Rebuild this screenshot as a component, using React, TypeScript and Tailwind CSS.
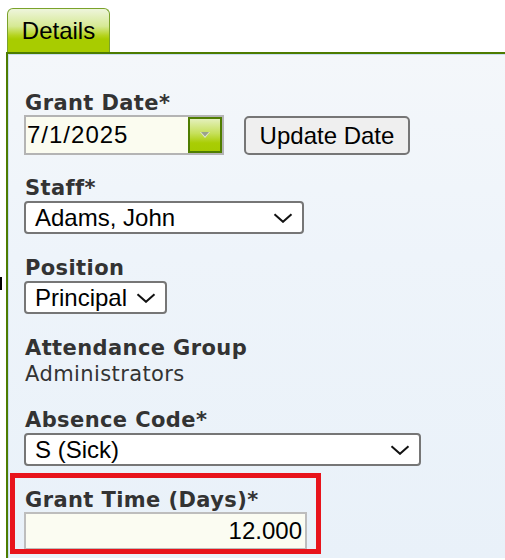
const Chevron = () => (
  <svg width="20" height="10" viewBox="0 0 20 10" fill="none">
    <path d="M1.5 1.2 10 8.8l8.5-7.6" stroke="#111" strokeWidth="2" />
  </svg>
);

const Label = ({ children }: { children: React.ReactNode }) => (
  <div className="ml-px font-['DejaVu_Sans',Verdana,sans-serif] text-[21px] leading-[24px] font-bold tracking-[0.4px] text-[#333]">
    {children}
  </div>
);

const FakeSelect = ({ value, width }: { value: string; width: string }) => (
  <div
    className={`mt-px flex h-[33px] items-center justify-between rounded-[4px] border-2 border-[#767676] bg-white pr-[9px] pl-[9px] text-[24px] text-black ${width}`}
  >
    <span className="leading-none">{value}</span>
    <Chevron />
  </div>
);

export default function App() {
  return (
    <div className="relative min-h-[560px] bg-white pt-2 font-['Liberation_Sans',Arial,sans-serif]">
      {/* stray clipped glyph at left edge */}
      <div className="absolute top-[277px] left-0 h-[13px] w-[2px] bg-black" />

      <div className="ml-[7px] flex h-[44px] w-[103px] items-center justify-center rounded-t-[6px] border border-b-0 border-[#7aa22a] bg-[linear-gradient(to_bottom,#eef5dc_0%,#d6e994_40%,#b4d31c_62%,#a8cc00_70%,#a8cc00_100%)] pt-px text-[24px] text-black">
        Details
      </div>

      <div className="ml-[6px] border-t-2 border-l-2 border-[#4d7c00]">
        <div className="min-h-[504px] border-t border-l border-[#c9def0] bg-[linear-gradient(to_bottom,#f4f7fa_0%,#eef4fa_40%,#e9f1f9_100%)] pt-[36px] pl-[15px]">
          {/* Grant Date */}
          <Label>Grant Date*</Label>
          <div className="flex items-center">
            <div className="flex h-[40px] w-[200px] border-2 border-[#b4b4b4] bg-[#fbfcf0]">
              <div className="flex flex-1 items-center pl-px text-[24px] tracking-[1px] text-black">
                7/1/2025
              </div>
              <div className="flex w-[34px] items-center justify-center border-2 border-[#4f7d00] bg-[linear-gradient(to_bottom,#e4f0bc_0%,#c6e05a_45%,#a9cd04_75%,#a6cb00_100%)]">
                <svg width="10" height="7" viewBox="0 0 10 7">
                  <path d="M0 0h10L5 6z" fill="#e2e6d4" />
                  <path d="M1 0h8L5 4.5z" fill="#9aa38a" />
                </svg>
              </div>
            </div>
            <button className="ml-[20px] h-[39px] w-[166px] rounded-[5px] border-2 border-[#767676] bg-[#efefef] text-[24px] text-black">
              Update Date
            </button>
          </div>

          {/* Staff */}
          <div className="mt-[21px]">
            <Label>Staff*</Label>
            <FakeSelect value="Adams, John" width="w-[280px]" />
          </div>

          {/* Position */}
          <div className="mt-[22px]">
            <Label>Position</Label>
            <FakeSelect value="Principal" width="w-[143px]" />
          </div>

          {/* Attendance group */}
          <div className="mt-[22px]">
            <Label>Attendance Group</Label>
            <div className="ml-px mt-[2px] font-['DejaVu_Sans',Verdana,sans-serif] text-[21px] leading-[24px] tracking-[0.4px] text-[#333]">
              Administrators
            </div>
          </div>

          {/* Absence code */}
          <div className="mt-[22px]">
            <Label>Absence Code*</Label>
            <FakeSelect value="S (Sick)" width="w-[397px]" />
          </div>

          {/* Grant time */}
          <div className="relative mt-[22px] w-[283px]">
            <Label>Grant Time (Days)*</Label>
            <div className="flex h-[38px] items-center justify-end border-2 border-[#bdbdbd] bg-[#fbfcf2] pr-[3px] text-[24px] text-black">
              12.000
            </div>
            <div className="absolute top-[-15px] left-[-14px] h-[81px] w-[311px] border-[5px] border-[#e8141c]" />
          </div>
        </div>
      </div>
    </div>
  );
}
